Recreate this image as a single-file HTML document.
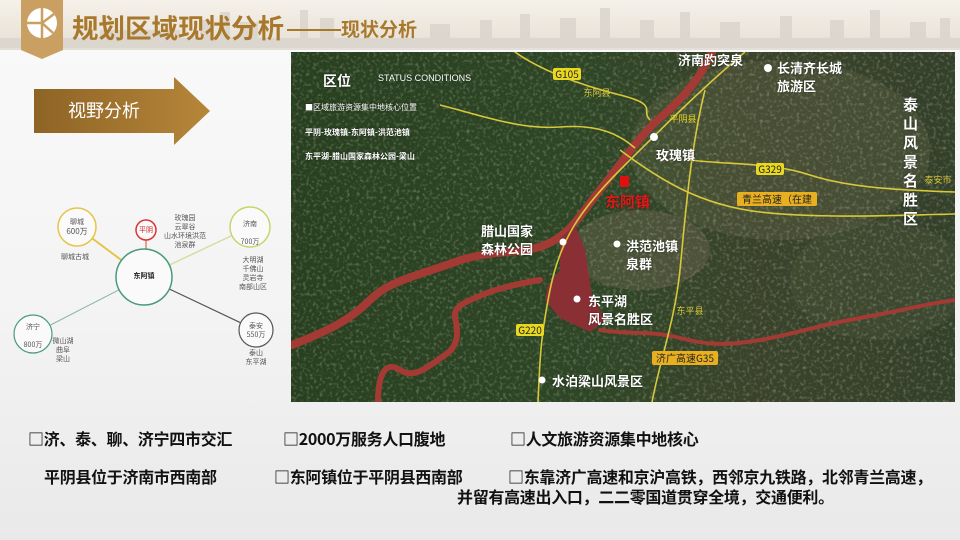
<!DOCTYPE html>
<html><head><meta charset="utf-8"><style>
*{margin:0;padding:0;box-sizing:border-box}
body{width:960px;height:540px;overflow:hidden;position:relative;font-family:"Liberation Sans","Noto Sans CJK SC",sans-serif;background:linear-gradient(180deg,#fafafa 0%,#f3f3f3 60%,#e9e9ea 100%)}
.hdr{position:absolute;left:0;top:0;width:960px;height:50px;background:linear-gradient(180deg,#f5f1ea 0%,#ece6dc 60%,#e3dfd8 100%)}
.sky{position:absolute;left:0;top:0}
.t1{position:absolute;left:72px;top:7px;font-size:26.5px;font-weight:bold;color:#a8782c;font-family:"Noto Sans CJK SC",sans-serif}
.t2{position:absolute;left:341px;top:15px;font-size:19px;font-weight:bold;color:#a8782c;font-family:"Noto Sans CJK SC",sans-serif}
.dash{position:absolute;left:287px;top:29px;width:54px;height:2px;background:#a8782c}
.lab{position:absolute;color:#fff;font-weight:bold;font-family:"Noto Sans CJK SC",sans-serif;text-shadow:0 0 2px rgba(0,0,0,.5)}
.bt{position:absolute;font-size:16px;font-weight:bold;color:#111;font-family:"Noto Sans CJK SC",sans-serif;white-space:nowrap;letter-spacing:-0.3px}
.d{position:absolute;font-size:7px;color:#555;text-align:center;line-height:9px;font-family:"Noto Sans CJK SC",sans-serif}
</style></head><body>
<div class="hdr"></div>
<svg class="sky" width="960" height="50">
<g fill="#d9d4cc" opacity=".8">
<rect x="0" y="38" width="960" height="10"/>
<rect x="200" y="20" width="14" height="20"/><rect x="220" y="12" width="10" height="28"/><rect x="240" y="22" width="18" height="18"/>
<rect x="300" y="10" width="8" height="30"/><rect x="320" y="18" width="14" height="22"/><rect x="430" y="24" width="20" height="16"/>
<rect x="480" y="20" width="12" height="20"/><rect x="520" y="14" width="10" height="26"/><rect x="560" y="18" width="16" height="22"/>
<rect x="600" y="8" width="10" height="32"/><rect x="640" y="20" width="14" height="20"/><rect x="680" y="12" width="10" height="28"/>
<rect x="720" y="22" width="20" height="18"/><rect x="780" y="16" width="12" height="24"/><rect x="830" y="20" width="14" height="20"/>
<rect x="870" y="10" width="10" height="30"/><rect x="910" y="22" width="16" height="18"/><rect x="940" y="18" width="10" height="22"/>
<rect x="100" y="30" width="80" height="10"/>
</g></svg>
<svg style="position:absolute;left:21px;top:0" width="42" height="60">
<path d="M0 0H42V50L21 59L0 50Z" fill="#c9a061"/>
<circle cx="21" cy="23" r="15" fill="#fff"/>
<path d="M21 8V38M6 23H21M21 23L33 14M21 23L32 33" stroke="#c9a061" stroke-width="2.5" fill="none"/>
</svg>
<div class="t1">规划区域现状分析</div>
<div class="dash"></div><div class="t2">现状分析</div>

<svg style="position:absolute;left:34px;top:77px" width="178" height="70">
<defs><linearGradient id="ag" x1="0" x2="1"><stop offset="0" stop-color="#8e6425"/><stop offset="1" stop-color="#b6863a"/></linearGradient></defs>
<path d="M0 12H140V0L176 34L140 68V56H0Z" fill="url(#ag)"/>
</svg>
<div style="position:absolute;left:68px;top:97px;color:#fff;font-size:18px;font-family:'Noto Sans CJK SC',sans-serif">视野分析</div>

<svg style="position:absolute;left:0;top:200px" width="290" height="180">
<line x1="77" y1="27" x2="144" y2="77" stroke="#e6c44a" stroke-width="2"/>
<line x1="146" y1="30" x2="146" y2="60" stroke="#d44" stroke-width="1"/>
<line x1="250" y1="27" x2="144" y2="77" stroke="#d8dca0" stroke-width="1.5"/>
<line x1="33" y1="134" x2="144" y2="77" stroke="#8ab8a0" stroke-width="1"/>
<line x1="256" y1="130" x2="144" y2="77" stroke="#555" stroke-width="1.2"/>
<circle cx="144" cy="77" r="28" fill="#fafafa" stroke="#4a9a7a" stroke-width="1.5"/>
<circle cx="77" cy="27" r="19" fill="#fafafa" stroke="#e6c44a" stroke-width="1.5"/>
<circle cx="146" cy="30" r="10" fill="#fafafa" stroke="#d33" stroke-width="1.5"/>
<circle cx="250" cy="27" r="20" fill="#fafafa" stroke="#c8d46a" stroke-width="1.5"/>
<circle cx="33" cy="134" r="19" fill="#fafafa" stroke="#4a9a7a" stroke-width="1.2"/>
<circle cx="256" cy="130" r="17" fill="#fafafa" stroke="#555" stroke-width="1.2"/>
</svg>
<div class="d" style="left:60px;top:218px;width:34px">聊城<br><span style="font-size:8px">600万</span></div>
<div class="d" style="left:50px;top:253px;width:50px">聊城古城</div>
<div class="d" style="left:136px;top:226px;width:20px;color:#c22">平阴</div>
<div class="d" style="left:160px;top:214px;width:50px">玫瑰园<br>云翠谷<br>山水环境洪范<br>池泉群</div>
<div class="d" style="left:232px;top:220px;width:36px">济南<br><br>700万</div>
<div class="d" style="left:230px;top:256px;width:46px">大明湖<br>千佛山<br>灵岩寺<br>南部山区</div>
<div class="d" style="left:112px;top:272px;width:64px;font-weight:bold;color:#222">东阿镇</div>
<div class="d" style="left:14px;top:323px;width:38px">济宁<br><br>800万</div>
<div class="d" style="left:48px;top:337px;width:30px">微山湖<br>曲阜<br>梁山</div>
<div class="d" style="left:240px;top:322px;width:32px">泰安<br>550万</div>
<div class="d" style="left:240px;top:349px;width:32px">泰山<br>东平湖</div>

<svg style="position:absolute;left:291px;top:52px" width="664" height="350" viewBox="291 52 664 350">
<defs>
<linearGradient id="mg" x1="0" y1="0" x2="1" y2="0"><stop offset="0" stop-color="#28401f"/><stop offset=".45" stop-color="#2e4626"/><stop offset=".7" stop-color="#3a432a"/><stop offset="1" stop-color="#33402a"/></linearGradient>
<filter id="nz"><feTurbulence type="fractalNoise" baseFrequency=".3" numOctaves="2" seed="3"/><feColorMatrix values="0 0 0 0 .65  0 0 0 0 .65  0 0 0 0 .55  0 0 0 1.6 -.8"/></filter>
</defs>
<rect x="291" y="52" width="664" height="350" fill="url(#mg)"/>
<ellipse cx="780" cy="150" rx="150" ry="90" fill="#6a6a4c" opacity=".3"/>
<ellipse cx="640" cy="250" rx="70" ry="40" fill="#7a6e58" opacity=".35"/>
<ellipse cx="880" cy="280" rx="90" ry="60" fill="#55603f" opacity=".25"/>
<rect x="291" y="52" width="664" height="350" filter="url(#nz)" opacity=".55"/>
<g fill="none" stroke="#a43a34" stroke-linecap="round" stroke-linejoin="round">
<path d="M292 345C330 330 350 320 370 300S420 275 455 262 520 255 545 245 580 215 600 190 640 135 660 118 700 80 712 52" stroke-width="8"/>
<path d="M378 402C378 375 385 360 400 370S430 365 445 355 458 330 455 318 470 300 482 295 510 285 540 280" stroke-width="6"/>
<path d="M600 330C630 335 650 330 680 338S730 345 760 340 820 325 860 318 920 305 955 300" stroke-width="4"/>
<path d="M560 238L575 225L585 250L592 295L605 320L590 332L560 318L545 300L548 285L560 270Z" fill="#8a3035" stroke="none"/>
</g>
<g fill="none" stroke="#d8c83a" stroke-width="1.6">
<path d="M440 105C480 115 520 130 560 127S620 135 635 148"/>
<path d="M515 52C540 70 580 85 620 95S640 110 650 120"/>
<path d="M745 52C700 90 660 130 620 170S560 240 550 290 540 360 538 402"/>
<path d="M705 90C690 150 685 220 680 270S660 360 652 402"/>
<path d="M620 150C660 180 700 205 760 212S900 215 955 214"/>
<path d="M690 160C730 165 770 162 810 175S900 190 955 192"/>
</g>
<g font-family="Noto Sans CJK SC,sans-serif" font-size="10" text-anchor="middle">
<rect x="553" y="68" width="28" height="12" rx="2" fill="#e8d820"/><text x="567" y="78" fill="#222">G105</text>
<text x="597" y="96" fill="#d8c83a" font-size="9">东阿县</text>
<text x="683" y="122" fill="#e8d820" font-size="9">平阴县</text>
<rect x="756" y="163" width="28" height="12" rx="2" fill="#e8d820"/><text x="770" y="173" fill="#222">G329</text>
<rect x="737" y="192" width="80" height="14" rx="2" fill="#e8b020"/><text x="777" y="203" fill="#222">青兰高速（在建</text>
<text x="938" y="183" fill="#d8c83a" font-size="9">泰安市</text>
<rect x="516" y="324" width="28" height="12" rx="2" fill="#e8d820"/><text x="530" y="334" fill="#222">G220</text>
<text x="690" y="314" fill="#d8c83a" font-size="9">东平县</text>
<rect x="652" y="351" width="66" height="14" rx="2" fill="#e8b020"/><text x="685" y="362" fill="#222">济广高速G35</text>
</g>
<g fill="#fff"><circle cx="768" cy="68" r="4"/><circle cx="654" cy="137" r="4"/><circle cx="563" cy="242" r="3.5"/><circle cx="617" cy="244" r="3.5"/><circle cx="577" cy="299" r="3.5"/><circle cx="542" cy="380" r="3.5"/></g>
<rect x="620" y="176" width="9" height="11" fill="#e01010"/>
</svg>
<div class="lab" style="left:323px;top:71px;font-size:14px">区位</div>
<div class="lab" style="left:378px;top:73px;font-size:9px;font-weight:normal;font-family:'Liberation Sans',sans-serif">STATUS CONDITIONS</div>
<div class="lab" style="left:305px;top:102px;font-size:8px;font-weight:normal">■区域旅游资源集中地核心位置</div>
<div class="lab" style="left:305px;top:127px;font-size:8px">平阴-玫瑰镇-东阿镇-洪范池镇</div>
<div class="lab" style="left:305px;top:151px;font-size:8px">东平湖-腊山国家森林公园-梁山</div>
<div class="lab" style="left:678px;top:50px;font-size:13px">济南趵突泉</div>
<div class="lab" style="left:777px;top:59px;font-size:13px;line-height:18px">长清齐长城<br>旅游区</div>
<div class="lab" style="left:903px;top:95px;font-size:15px;width:16px;line-height:19px">泰山风景名胜区</div>
<div class="lab" style="left:656px;top:145px;font-size:13px">玫瑰镇</div>
<div class="lab" style="left:605px;top:191px;font-size:15px;color:#e01818">东阿镇</div>
<div class="lab" style="left:481px;top:222px;font-size:13px;line-height:18px">腊山国家<br>森林公园</div>
<div class="lab" style="left:626px;top:237px;font-size:13px;line-height:18px">洪范池镇<br>泉群</div>
<div class="lab" style="left:588px;top:292px;font-size:13px;line-height:18px">东平湖<br>风景名胜区</div>
<div class="lab" style="left:552px;top:371px;font-size:13px">水泊梁山风景区</div>

<div class="bt" style="left:28px;top:426px">□济、泰、聊、济宁四市交汇</div>
<div class="bt" style="left:283px;top:426px">□2000万服务人口腹地</div>
<div class="bt" style="left:510px;top:426px">□人文旅游资源集中地核心</div>
<div class="bt" style="left:44px;top:464px">平阴县位于济南市西南部</div>
<div class="bt" style="left:274px;top:464px">□东阿镇位于平阴县西南部</div>
<div class="bt" style="left:508px;top:464px">□东靠济广高速和京沪高铁，西邻京九铁路，北邻青兰高速，</div>
<div class="bt" style="left:457px;top:484px">并留有高速出入口，二二零国道贯穿全境，交通便利。</div>
</body></html>
